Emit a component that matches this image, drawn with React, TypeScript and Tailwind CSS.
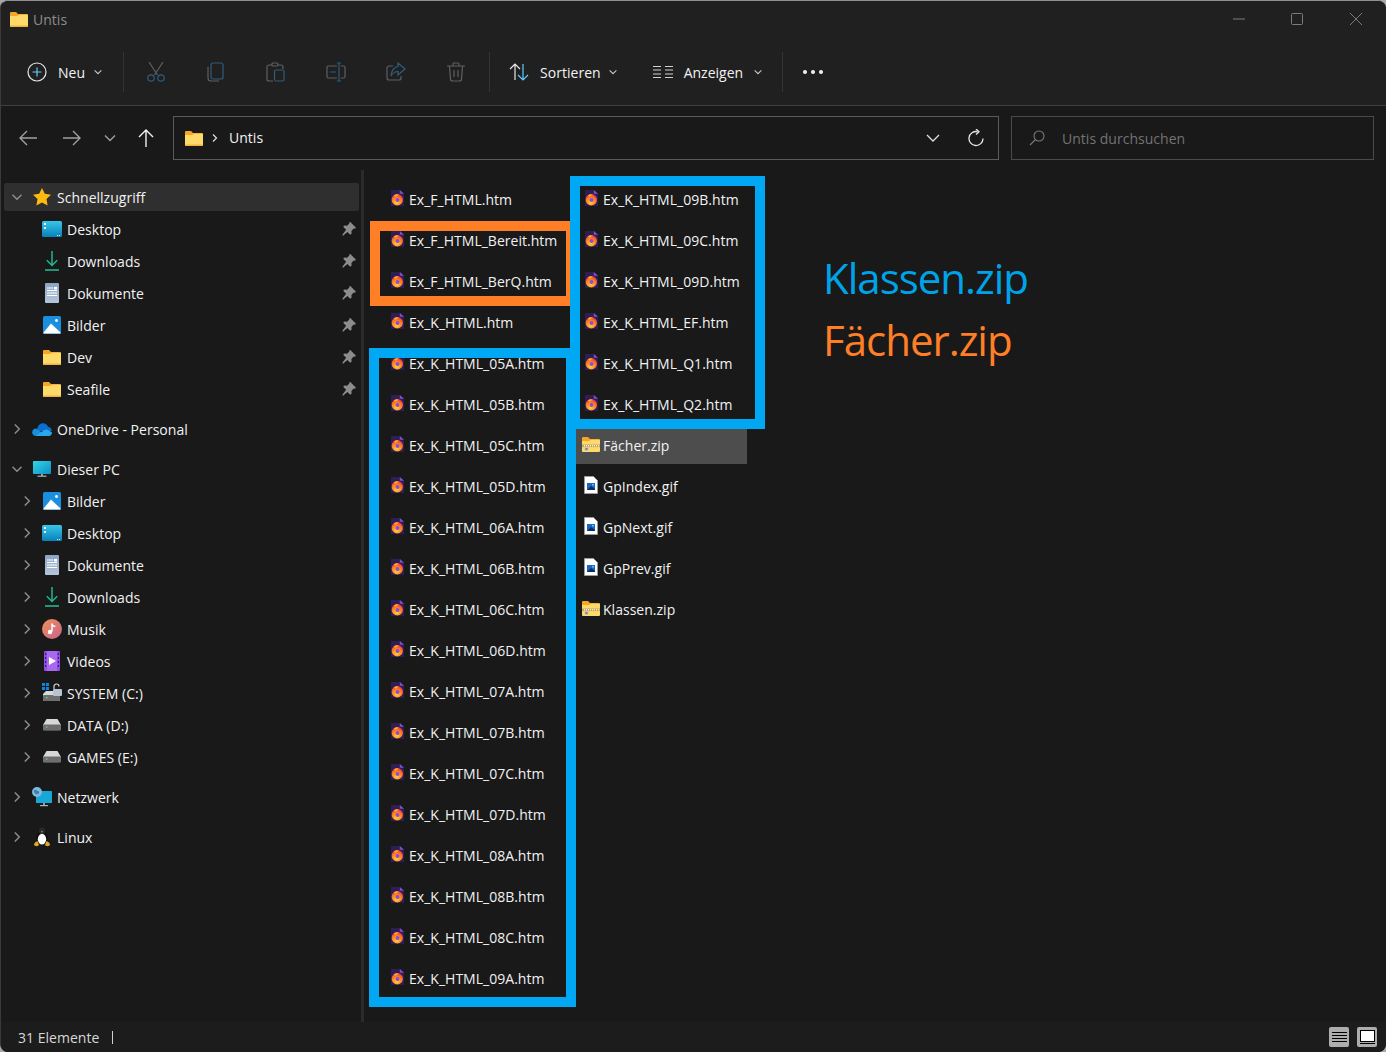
import React from "react";

const Chev = ({ open, className = "" }: { open?: boolean; className?: string }) => (
  <svg width="12" height="12" viewBox="0 0 12 12" fill="none" stroke="#8f8f8f" strokeWidth="1.4" className={className}>
    {open ? <path d="M1.500 3.800 6 8.300l4.500-4.500" /> : <path d="M3.800 1.500 8.300 6l-4.500 4.500" />}
  </svg>
);

const Folder = ({ w = 18, h = 15 }: { w?: number; h?: number }) => (
  <svg width={w} height={h} viewBox="0 0 18 15">
    <path d="M0 1a1 1 0 0 1 1-1h5l2 2h9a1 1 0 0 1 1 1v2H0z" fill="#f5a623" />
    <path d="M0 4h7l2-1.200h8a1 1 0 0 1 1 1V14a1 1 0 0 1-1 1H1a1 1 0 0 1-1-1z" fill="#ffd969" />
    <path d="M0 13.600h18V14a1 1 0 0 1-1 1H1a1 1 0 0 1-1-1z" fill="#eeb33d" />
  </svg>
);

const Star = () => (
  <svg width="20" height="20" viewBox="0 0 20 20">
    <path d="M10 1l2.800 5.800 6.200.9-4.500 4.400 1.100 6.300L10 15.400l-5.600 3 1.100-6.300L1 7.700l6.200-.9z" fill="#fdbb11" />
  </svg>
);

const DesktopI = () => (
  <svg width="20" height="16" viewBox="0 0 20 16">
    <defs>
      <linearGradient id="dk" x1="0" y1="0" x2="0" y2="1">
        <stop offset="0" stopColor="#38c6ea" />
        <stop offset="1" stopColor="#0a80b8" />
      </linearGradient>
    </defs>
    <rect width="20" height="16" rx="1.500" fill="url(#dk)" />
    <rect x="2" y="2" width="2" height="2" fill="#fff" />
    <rect x="2" y="6" width="2" height="2" fill="#d6f3fb" />
    <rect x="15" y="14" width="1" height="1" fill="#d6f3fb" />
    <rect x="17" y="14" width="1" height="1" fill="#d6f3fb" />
  </svg>
);

const DownloadI = () => (
  <svg width="16" height="20" viewBox="0 0 16 20" fill="none" stroke="#20b68f" strokeWidth="1.500">
    <path d="M8 0v14.500M2.800 9.200 8 14.500l5.200-5.300" />
    <path d="M1 19h14" strokeWidth="1.600" />
  </svg>
);

const DocI = () => (
  <svg width="14" height="20" viewBox="0 0 14 20">
    <defs>
      <linearGradient id="dc" x1="0" y1="0" x2="0" y2="1">
        <stop offset="0" stopColor="#8aa4c4" />
        <stop offset="1" stopColor="#b6c6d8" />
      </linearGradient>
    </defs>
    <rect width="14" height="20" rx="1" fill="url(#dc)" />
    <path d="M2 5h6M2 7.500h10M2 10h10M2 12.500h10" stroke="#fff" strokeWidth="1" />
    <rect x="9" y="4" width="3" height="2.500" fill="#fff" />
  </svg>
);

const PicI = () => (
  <svg width="18" height="18" viewBox="0 0 18 18">
    <rect width="18" height="18" rx="1.500" fill="#1a8fe0" />
    <circle cx="13.500" cy="4.500" r="1.400" fill="#fff" />
    <path d="M0.500 16.500 8 7.500l9.500 9V17a.6.6 0 0 1-.6.6H1a.6.6 0 0 1-.6-.6z" fill="#fff" />
  </svg>
);

const Cloud = () => (
  <svg width="20" height="13" viewBox="0 0 20 13">
    <path d="M5 6.500C5.600 2.500 8 .2 11 .2c2.400 0 4.200 1.300 5 3.600 2.200.2 3.800 2 3.800 4.300H4z" fill="#0a6fd0" />
    <path d="M4.200 13C1.800 13 .2 11.200.2 9.200c0-2 1.400-3.600 3.600-3.700l6 3.800L14 13z" fill="#1490df" />
    <path d="M4 13l6-4.500 2-1.300c1.300-.9 2.400-1 4-.2l3.800 2.300c.4 2.100-.9 3.700-2.800 3.700z" fill="#28a8ea" />
  </svg>
);

const Monitor = () => (
  <svg width="18" height="16" viewBox="0 0 18 16">
    <defs>
      <linearGradient id="mo" x1="0" y1="0" x2="1" y2="1">
        <stop offset="0" stopColor="#30d5e8" />
        <stop offset="1" stopColor="#0f8fc4" />
      </linearGradient>
    </defs>
    <rect width="18" height="13" rx="0.800" fill="url(#mo)" />
    <rect x="8" y="13" width="2" height="2" fill="#8b9aa5" />
    <rect x="4.500" y="14.600" width="9" height="1.200" fill="#a9b5bd" />
  </svg>
);

const Music = () => (
  <svg width="20" height="20" viewBox="0 0 20 20">
    <defs>
      <linearGradient id="mu" x1="0" y1="0" x2="1" y2="1">
        <stop offset="0" stopColor="#f0915a" />
        <stop offset="1" stopColor="#c8628c" />
      </linearGradient>
    </defs>
    <circle cx="10" cy="10" r="10" fill="url(#mu)" />
    <path d="M10 4.500v8" stroke="#fff" strokeWidth="1.500" />
    <path d="M10 4.500c.5 1.500 2 2 3.300 2v1.700C12 8.200 10.800 7.600 10 6.800z" fill="#fff" />
    <circle cx="8" cy="13" r="2.200" fill="#fff" />
  </svg>
);

const Video = () => (
  <svg width="16" height="20" viewBox="0 0 16 20">
    <rect width="16" height="20" rx="1" fill="#8f4fe0" />
    <rect x="3" y="0" width="10" height="20" fill="#a868f0" />
    <path d="M5 6l7 4-7 4z" fill="#fff" />
    <path d="M1 2h1.200v2H1zM1 6h1.200v2H1zM1 10h1.200v2H1zM1 14h1.200v2H1zM13.800 2H15v2h-1.200zM13.800 6H15v2h-1.200zM13.800 10H15v2h-1.200zM13.800 14H15v2h-1.200z" fill="#3e1a78" />
  </svg>
);

const Drive = () => (
  <svg width="18" height="12" viewBox="0 0 18 12">
    <path d="M3.500 0h11L18 6v4a1.200 1.200 0 0 1-1.200 1.200H1.200A1.200 1.200 0 0 1 0 10V6z" fill="#d8d8d8" />
    <rect x="0" y="5.500" width="18" height="5.700" rx="1" fill="#6e6e6e" />
    <rect x="3" y="7.500" width="1.400" height="1.200" fill="#5fe07a" />
  </svg>
);

const SysDrive = () => (
  <svg width="20" height="20" viewBox="0 0 20 20">
    <path d="M0 0h3v3H0zM4 0h3v3H4zM0 4h3v3H0zM4 4h3v3H4z" fill="#0a86e0" />
    <path d="M4 8h12l2 3v6a1 1 0 0 1-1 1H2a1 1 0 0 1-1-1v-6z" fill="#d8d8d8" />
    <rect x="1" y="12" width="17" height="6" rx="1" fill="#6e6e6e" />
    <rect x="4" y="14" width="1.400" height="1.200" fill="#5fe07a" />
    <path d="M12 6V3.500a2.500 2.500 0 0 1 5 0" fill="none" stroke="#cfd6dc" strokeWidth="1.200" />
    <rect x="11" y="6" width="9" height="7" rx="1" fill="#b5c4d0" />
  </svg>
);

const Network = () => (
  <svg width="20" height="20" viewBox="0 0 20 20">
    <rect x="4" y="4" width="16" height="12" rx="0.600" fill="#18a8d8" />
    <rect x="11" y="16" width="2" height="2" fill="#8b9aa5" />
    <rect x="8" y="18" width="8" height="1.200" fill="#a9b5bd" />
    <circle cx="5" cy="5" r="5" fill="#7fb8dc" />
    <path d="M2 3c2-1 3 1 4 1s2 2 0 3-3-1-4-2z" fill="#3f7fa8" />
  </svg>
);

const Tux = () => (
  <svg width="16" height="20" viewBox="0 0 16 20">
    <ellipse cx="8" cy="11" rx="5.600" ry="7" fill="#0c0c0c" />
    <ellipse cx="8" cy="4" rx="3" ry="3.600" fill="#2a2a2a" />
    <ellipse cx="8" cy="12.200" rx="4.200" ry="5.400" fill="#fff" />
    <path d="M7 4.200h2l-1 1.400z" fill="#f0b020" />
    <path d="M0 18c0-2 2-3.800 3.600-3.800L5 18c-1 1.600-4 1.400-5 0zM16 18c0-2-2-3.800-3.600-3.800L11 18c1 1.600 4 1.400 5 0z" fill="#e8a818" />
  </svg>
);

const Pin = () => (
  <svg width="14" height="14" viewBox="0 0 14 14">
    <path d="M8.300 0 14 5.700l-1.300 1.100-1-.2-2.300 2.300.2 2.600-1.300 1.300-2.900-2.900L1 13.800l-.8-.8 3.900-5.300L1.200 4.800l1.300-1.300 2.600.2 2.300-2.300-.2-1z" fill="#8c8c8c" />
  </svg>
);

const Fx = () => (
  <svg width="13" height="16" viewBox="0 0 13 16" className="shrink-0">
    <defs>
      <radialGradient id="fx" cx="0.45" cy="0.75" r="0.75">
        <stop offset="0" stopColor="#ffcf3a" />
        <stop offset="0.600" stopColor="#ff7a1f" />
        <stop offset="1" stopColor="#e8304e" />
      </radialGradient>
    </defs>
    <path d="M0 0h9l4 3.500V16H0z" fill="#2e1d56" />
    <path d="M8.800 0v3.800H13z" fill="#7a52c8" />
    <circle cx="6.300" cy="9.700" r="5.700" fill="url(#fx)" />
    <circle cx="6.500" cy="10" r="2" fill="#8a4fd8" />
    <path d="M2.800 5.600c1.500-1.400 3.600-1.600 5.400-.7-1.700.1-2.800 1-3.200 2.200z" fill="#ffb11f" />
  </svg>
);

const Zip = () => (
  <svg width="18" height="15" viewBox="0 0 18 15" className="shrink-0">
    <path d="M0 1a1 1 0 0 1 1-1h5l2 2h9a1 1 0 0 1 1 1v2H0z" fill="#f5a623" />
    <path d="M0 4h7l2-1.200h8a1 1 0 0 1 1 1V14a1 1 0 0 1-1 1H1a1 1 0 0 1-1-1z" fill="#ffd969" />
    <path d="M0 7.500h18v2.600H0z" fill="#c9a65a" />
    <path d="M2 8h1v1.600H2zM4 8h1v1.600H4zM6 8h1v1.600H6zM8 8h1v1.600H8zM10 8h1v1.600h-1zM12 8h1v1.600h-1zM14 8h1v1.600h-1zM16 8h1v1.600h-1z" fill="#f3f0e6" />
    <rect x="2.500" y="10" width="4" height="4" fill="#c8c8c8" />
    <rect x="3.500" y="11" width="2" height="2" fill="#7c7c7c" />
  </svg>
);

const Gif = () => (
  <svg width="14" height="18" viewBox="0 0 14 18" className="shrink-0">
    <path d="M.5.5h9l4 4v13H.5z" fill="#fff" stroke="#9c9c9c" />
    <rect x="3" y="7" width="8" height="7" fill="#1a66c0" />
    <path d="M3 14l4-4 4 3v1z" fill="#0c2e66" />
    <circle cx="9" cy="8.800" r="1" fill="#6cc4f5" />
  </svg>
);

type Row = { label: string; icon: React.ReactNode; level: 0 | 1; chev?: "open" | "closed"; pin?: boolean; active?: boolean };

const quick: Row[] = [
  { label: "Schnellzugriff", icon: <Star />, level: 0, chev: "open", active: true },
  { label: "Desktop", icon: <DesktopI />, level: 1, pin: true },
  { label: "Downloads", icon: <DownloadI />, level: 1, pin: true },
  { label: "Dokumente", icon: <DocI />, level: 1, pin: true },
  { label: "Bilder", icon: <PicI />, level: 1, pin: true },
  { label: "Dev", icon: <Folder />, level: 1, pin: true },
  { label: "Seafile", icon: <Folder />, level: 1, pin: true },
];
const pc: Row[] = [
  { label: "Dieser PC", icon: <Monitor />, level: 0, chev: "open" },
  { label: "Bilder", icon: <PicI />, level: 1, chev: "closed" },
  { label: "Desktop", icon: <DesktopI />, level: 1, chev: "closed" },
  { label: "Dokumente", icon: <DocI />, level: 1, chev: "closed" },
  { label: "Downloads", icon: <DownloadI />, level: 1, chev: "closed" },
  { label: "Musik", icon: <Music />, level: 1, chev: "closed" },
  { label: "Videos", icon: <Video />, level: 1, chev: "closed" },
  { label: "SYSTEM (C:)", icon: <SysDrive />, level: 1, chev: "closed" },
  { label: "DATA (D:)", icon: <Drive />, level: 1, chev: "closed" },
  { label: "GAMES (E:)", icon: <Drive />, level: 1, chev: "closed" },
];

function NavRow({ r }: { r: Row }) {
  return (
    <div className="h-8 flex items-center relative">
      {r.active && <div className="absolute left-[3px] right-[2px] top-[2px] bottom-[2px] bg-[#2f2f2f] rounded-[2px]" />}
      <div className={`relative flex items-center w-full ${r.level === 1 ? "pl-[14px]" : "pl-[4px]"}`}>
        <div className="w-[22px] ml-[6px] shrink-0 flex items-center">
          {r.chev ? <Chev open={r.chev === "open"} /> : null}
        </div>
        <div className="w-5 h-5 shrink-0 flex items-center justify-center -ml-[1px]">{r.icon}</div>
        <span className="ml-[5px] text-[14px] text-[#f2f2f2] whitespace-nowrap">{r.label}</span>
        {r.pin && (
          <span className="ml-auto mr-[5px] flex">
            <Pin />
          </span>
        )}
      </div>
    </div>
  );
}

const col1 = ["Ex_F_HTML.htm","Ex_F_HTML_Bereit.htm","Ex_F_HTML_BerQ.htm","Ex_K_HTML.htm","Ex_K_HTML_05A.htm","Ex_K_HTML_05B.htm","Ex_K_HTML_05C.htm","Ex_K_HTML_05D.htm","Ex_K_HTML_06A.htm","Ex_K_HTML_06B.htm","Ex_K_HTML_06C.htm","Ex_K_HTML_06D.htm","Ex_K_HTML_07A.htm","Ex_K_HTML_07B.htm","Ex_K_HTML_07C.htm","Ex_K_HTML_07D.htm","Ex_K_HTML_08A.htm","Ex_K_HTML_08B.htm","Ex_K_HTML_08C.htm","Ex_K_HTML_09A.htm"];
const col2: { n: string; t: "fx" | "zip" | "gif"; sel?: boolean }[] = [
  { n: "Ex_K_HTML_09B.htm", t: "fx" },
  { n: "Ex_K_HTML_09C.htm", t: "fx" },
  { n: "Ex_K_HTML_09D.htm", t: "fx" },
  { n: "Ex_K_HTML_EF.htm", t: "fx" },
  { n: "Ex_K_HTML_Q1.htm", t: "fx" },
  { n: "Ex_K_HTML_Q2.htm", t: "fx" },
  { n: "Fächer.zip", t: "zip", sel: true },
  { n: "GpIndex.gif", t: "gif" },
  { n: "GpNext.gif", t: "gif" },
  { n: "GpPrev.gif", t: "gif" },
  { n: "Klassen.zip", t: "zip" },
];

function FileRow({ n, t, sel }: { n: string; t: "fx" | "zip" | "gif"; sel?: boolean }) {
  return (
    <div className={`h-9 w-[171px] flex items-center ${sel ? "bg-[#4d4d4d]" : ""}`}>
      <div className="w-[27px] shrink-0 flex justify-end pr-[3px]">
        {t === "fx" ? <span className="flex mr-[2px] -mt-[4px]"><Fx /></span> : t === "zip" ? <span className="flex -mt-[4px]"><Zip /></span> : <span className="flex mr-[2px] -mt-[4px]"><Gif /></span>}
      </div>
      <span className="text-[14px] text-[#f2f2f2] whitespace-nowrap mb-[2px]">{n}</span>
    </div>
  );
}

const Sep = () => <div className="w-px h-10 bg-[#333333] shrink-0" />;

const sw = { fill: "none", strokeWidth: 1.2 } as const;

export default function App() {
  return (
    <div className="w-[1386px] h-[1052px] bg-[#a9a9a9] overflow-hidden" style={{ fontFamily: '"Open Sans", "Liberation Sans", sans-serif', letterSpacing: "0.02px" }}>
      <div className="relative w-full h-full rounded-[8px] overflow-hidden flex flex-col bg-[#191919] border-l border-t border-l-[#3a3a3a] border-t-[#8f8f8f]">
        <div className="bg-[#202020] shrink-0 h-[105px] border-b border-[#3f3f3f] flex flex-col">
          <div className="h-[36px] shrink-0 flex items-center pl-[9px]">
            <Folder />
            <span className="ml-[5px] text-[14px] text-[#8c8c8c]">Untis</span>
            <div className="ml-auto flex items-center">
              <svg width="12" height="12" viewBox="0 0 12 12" className="mr-[46px]"><path d="M0 6h12" stroke="#7c7c7c" /></svg>
              <svg width="12" height="12" viewBox="0 0 12 12" className="mr-[46px]"><rect x="0.5" y="0.5" width="11" height="11" rx="1" stroke="#7c7c7c" fill="none" /></svg>
              <svg width="14" height="14" viewBox="0 0 14 14" className="mr-[23px]"><path d="M1 1l12 12M13 1 1 13" stroke="#7c7c7c" /></svg>
            </div>
          </div>
          <div className="flex-1 flex items-center pl-[26px] pt-[2px]">
            <svg width="20" height="20" viewBox="0 0 20 20" {...sw}><circle cx="10" cy="10" r="9" stroke="#e8e8e8" /><path d="M10 5.500v9M5.500 10h9" stroke="#60cdff" /></svg>
            <span className="ml-[11px] text-[14px] text-[#f2f2f2]">Neu</span>
            <Chev open className="ml-[7px] scale-75 [&_path]:stroke-[#c8c8c8]" />
            <div className="ml-[19px]"><Sep /></div>
            <svg className="ml-[22px]" width="20" height="20" viewBox="0 0 20 20" {...sw}>
              <path d="M3 0l8.500 13M17 0 8.500 13" stroke="#5f5f5f" />
              <circle cx="5" cy="16" r="3.200" stroke="#2f5d7c" />
              <circle cx="15" cy="16" r="3.200" stroke="#2f5d7c" />
            </svg>
            <svg className="ml-[41px]" width="18" height="20" viewBox="0 0 18 20" {...sw}>
              <path d="M1 5v11a3 3 0 0 0 3 3h8" stroke="#5f5f5f" />
              <rect x="4" y="1" width="12" height="16" rx="2" stroke="#2f5d7c" />
            </svg>
            <svg className="ml-[41px]" width="19" height="20" viewBox="0 0 19 20" {...sw}>
              <path d="M6 3H3a2 2 0 0 0-2 2v12a2 2 0 0 0 2 2h4M12 3h3a2 2 0 0 1 2 2v2" stroke="#5f5f5f" />
              <rect x="6" y="1" width="6" height="3" rx="1" stroke="#5f5f5f" />
              <rect x="8.500" y="8" width="9.500" height="11" rx="1.500" stroke="#2f5d7c" />
            </svg>
            <svg className="ml-[41px]" width="20" height="20" viewBox="0 0 20 20" {...sw}>
              <path d="M11 4H2.500A1.500 1.500 0 0 0 1 5.500v9A1.500 1.500 0 0 0 2.500 16H11M15 4h2.500A1.500 1.500 0 0 1 19 5.500v9a1.500 1.500 0 0 1-1.500 1.500H15" stroke="#5f5f5f" />
              <path d="M13 1v18M11 1h4M11 19h4M4 10h6" stroke="#2f5d7c" />
            </svg>
            <svg className="ml-[40px]" width="20" height="20" viewBox="0 0 20 20" {...sw}>
              <path d="M7 4H3a2 2 0 0 0-2 2v10a2 2 0 0 0 2 2h10a2 2 0 0 0 2-2v-2" stroke="#5f5f5f" />
              <path d="M12 1l7 6-7 6V9.500C9 9.500 6.500 11 5 14c0-5 3-9 7-9.500z" stroke="#2f5d7c" />
            </svg>
            <svg className="ml-[41px]" width="18" height="20" viewBox="0 0 18 20" {...sw} stroke="#5f5f5f">
              <path d="M0 4h18M6 4V2a1 1 0 0 1 1-1h4a1 1 0 0 1 1 1v2M2.500 4l1 13a2 2 0 0 0 2 2h7a2 2 0 0 0 2-2l1-13M7 8v7M11 8v7" />
            </svg>
            <div className="ml-[24px]"><Sep /></div>
            <svg className="ml-[19px]" width="20" height="18" viewBox="0 0 20 18" {...sw}>
              <path d="M6 17V1M1 6l5-5 5 5" stroke="#e8e8e8" />
              <path d="M14 1v16M9 12l5 5 5-5" stroke="#60cdff" />
            </svg>
            <span className="ml-[11px] text-[14px] text-[#f2f2f2]">Sortieren</span>
            <Chev open className="ml-[6px] scale-75 [&_path]:stroke-[#c8c8c8]" />
            <svg className="ml-[34px]" width="20" height="12" viewBox="0 0 20 12" fill="none" stroke="#d0d0d0">
              <path d="M0 .5h8M0 4h8M0 8h8M0 11.500h8M12 .5h8M12 4h8M12 8h8M12 11.500h8" />
            </svg>
            <span className="ml-[11px] text-[14px] text-[#f2f2f2]">Anzeigen</span>
            <Chev open className="ml-[9px] scale-75 [&_path]:stroke-[#c8c8c8]" />
            <div className="ml-[18px]"><Sep /></div>
            <div className="ml-[20px] flex gap-[4px]">
              <span className="w-[4px] h-[4px] rounded-full bg-[#f2f2f2]" />
              <span className="w-[4px] h-[4px] rounded-full bg-[#f2f2f2]" />
              <span className="w-[4px] h-[4px] rounded-full bg-[#f2f2f2]" />
            </div>
          </div>
        </div>

        <div className="h-[64px] shrink-0 flex items-start pl-[18px] pr-[12px] pt-[10px]">
          <div className="h-[44px] flex items-center shrink-0">
            <svg width="18" height="16" viewBox="0 0 18 16" fill="none" stroke="#a0a0a0" strokeWidth="1.400"><path d="M18 8H1M8 1 1 8l7 7" /></svg>
            <svg className="ml-[26px]" width="18" height="16" viewBox="0 0 18 16" fill="none" stroke="#a0a0a0" strokeWidth="1.400"><path d="M0 8h17M10 1l7 7-7 7" /></svg>
            <svg className="ml-[23px]" width="12" height="12" viewBox="0 0 12 12" fill="none" stroke="#a0a0a0" strokeWidth="1.400"><path d="M1 3.500 6 8.500l5-5" /></svg>
            <svg className="ml-[22px]" width="16" height="18" viewBox="0 0 16 18" fill="none" stroke="#f2f2f2" strokeWidth="1.400"><path d="M8 18V1M1 8l7-7 7 7" /></svg>
          </div>
          <div className="ml-[19px] w-[826px] h-[44px] border border-[#5a5a5a] flex items-center pl-[11px] pr-[14px]">
            <Folder />
            <svg className="ml-[9px]" width="6" height="8" viewBox="0 0 6 8" fill="none" stroke="#e0e0e0" strokeWidth="1.200"><path d="M1 .5 4.500 4 1 7.500" /></svg>
            <span className="ml-[11px] text-[14px] text-[#f2f2f2] -mt-[2px]">Untis</span>
            <svg className="ml-auto" width="14" height="14" viewBox="0 0 14 14" fill="none" stroke="#e0e0e0" strokeWidth="1.300"><path d="M1 4l6 6 6-6" /></svg>
            <svg className="ml-[28px]" width="16" height="18" viewBox="0 0 16 18" fill="none" stroke="#e8e8e8" strokeWidth="1.300">
              <path d="M9.500 2.700A7 7 0 1 0 15 9.500" />
              <path d="M8 0l3 2.800L8 5.500" />
            </svg>
          </div>
          <div className="ml-[12px] flex-1 h-[44px] border border-[#4a4a4a] flex items-center pl-[17px]">
            <svg width="16" height="16" viewBox="0 0 16 16" fill="none" stroke="#7a7a7a" strokeWidth="1.100"><circle cx="10" cy="6" r="5" /><path d="M6.500 9.500 1 15" /></svg>
            <span className="ml-[17px] text-[14px] text-[#737373]">Untis durchsuchen</span>
          </div>
        </div>

        <div className="flex-1 flex min-h-0">
          <div className="w-[360px] shrink-0 pt-[11px] flex flex-col gap-2">
            <div>{quick.map((r, i) => <NavRow key={i} r={r} />)}</div>
            <NavRow r={{ label: "OneDrive - Personal", icon: <Cloud />, level: 0, chev: "closed" }} />
            <div>{pc.map((r, i) => <NavRow key={i} r={r} />)}</div>
            <NavRow r={{ label: "Netzwerk", icon: <Network />, level: 0, chev: "closed" }} />
            <NavRow r={{ label: "Linux", icon: <Tux />, level: 0, chev: "closed" }} />
          </div>
          <div className="w-[3px] shrink-0 bg-[#2b2b2b]" />
          <div className="flex-1 flex pl-[18px] pt-[12px] gap-[23px]">
            <div className="flex flex-col gap-[5px]">{col1.map((n) => <FileRow key={n} n={n} t="fx" />)}</div>
            <div className="flex flex-col gap-[5px]">{col2.map((f) => <FileRow key={f.n} {...f} />)}</div>
          </div>
        </div>

        <div className="h-[30px] shrink-0 bg-[#1c1c1c] flex items-center pl-[17px] pr-[9px]">
          <span className="text-[14px] text-[#d8d8d8]">31 Elemente</span>
          <div className="ml-[13px] w-px h-[13px] bg-[#d0d0d0]" />
          <div className="ml-auto flex gap-[8px]">
            <div className="w-5 h-5 rounded-[2px] bg-[#adadad] flex flex-col justify-center items-center gap-[2px]">
              <div className="w-[15px] h-px bg-black" /><div className="w-[15px] h-px bg-black" /><div className="w-[15px] h-px bg-black" /><div className="w-[15px] h-px bg-black" />
            </div>
            <div className="w-5 h-5 rounded-[2px] bg-[#adadad] flex flex-col items-center justify-center gap-[1px]">
              <div className="w-[15px] h-[12px] bg-white border border-black" /><div className="w-[15px] h-px bg-black" />
            </div>
          </div>
        </div>

        {/* hand-drawn annotations over the screenshot */}
        <div className="absolute left-[369px] top-[220px] w-[206px] h-[85px] border-[10px] border-[#ff7f27]" />
        <div className="absolute left-[368px] top-[347px] w-[207px] h-[659px] border-[10px] border-[#00a8f3]" />
        <div className="absolute left-[569px] top-[175px] w-[195px] h-[253px] border-[10px] border-[#00a8f3]" />
        <div className="absolute left-[822px] top-[250px] text-[42px] leading-[54px] text-[#00a2e8] tracking-[-1px]">Klassen.zip</div>
        <div className="absolute left-[822px] top-[312px] text-[42px] leading-[54px] text-[#ff7f27] tracking-[-1px]">Fächer.zip</div>
      </div>
    </div>
  );
}
